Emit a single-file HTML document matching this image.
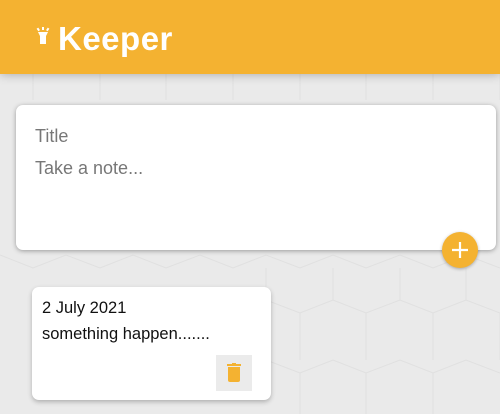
<!DOCTYPE html>
<html><head><style>
body{margin:0;width:500px;height:414px;background:#eaeaea;font-family:"Liberation Sans",sans-serif;position:relative;overflow:hidden}
.hd{position:absolute;left:0;top:0;width:500px;height:74px;background:#f4b231;box-shadow:0 0 10px rgba(0,0,0,.3)}
.logo{position:absolute;left:58px;top:20px;color:#fff;font-size:33px;font-weight:bold;letter-spacing:0.5px}
.form{position:absolute;left:16px;top:105px;width:480px;height:145px;background:#fff;border-radius:7px;box-shadow:0 1px 5px rgba(0,0,0,.35)}
.ph{position:absolute;left:19px;color:#777;font-size:18px}
.add{position:absolute;left:442px;top:232px;width:36px;height:36px;border-radius:50%;background:#f4b231;box-shadow:0 1px 3px rgba(0,0,0,.3)}
.note{position:absolute;left:32px;top:287px;width:239px;height:113px;background:#fff;border-radius:7px;box-shadow:0 2px 5px rgba(0,0,0,.25)}
.note div{position:absolute;left:10px;font-size:16.5px;color:#111}
.del{position:absolute;left:216px;top:355px;width:36px;height:36px;background:#ebebeb}
</style></head><body>
<svg width="500" height="414" style="position:absolute;left:0;top:0" stroke="#e0e0e0" fill="none" stroke-width="1">
<path d="M33 74V100M100 74V100M166 74V100M233 74V100M300 74V100M366 74V100M433 74V100M500 74V100"/>
<path d="M0 255L33 268L66 255L100 268L133 255L166 268L200 255L233 268L266 255L300 268L333 255L366 268L400 255L433 268L466 255L500 268M266 268V300M333 268V300M400 268V300M466 268V300M266 300L300 313L333 300L366 313L400 300L433 313L466 300L500 313M300 313V360M366 313V360M433 313V360M500 313V360M266 360L300 373L333 360L366 373L400 360L433 373L466 360L500 373M300 373V414M366 373V414M433 373V414"/>
</svg>
<div class="hd">
<svg style="position:absolute;left:36px;top:27px" width="14" height="18" viewBox="0 0 14 18" fill="#fff"><rect x="6" y="0" width="2" height="3"/><rect x="1" y="1" width="2" height="3" transform="rotate(-35 2 2)"/><rect x="11" y="1" width="2" height="3" transform="rotate(35 12 2)"/><path d="M2 5H12L10 9V17H4V9Z"/></svg>
<div class="logo">Keeper</div>
</div>
<div class="form"><div class="ph" style="top:21px">Title</div><div class="ph" style="top:53px">Take a note...</div></div>
<div class="add"><svg width="36" height="36"><path d="M18 10V26M10 18H26" stroke="#fff" stroke-width="2.2"/></svg></div>
<div class="note"><div style="top:12px">2 July 2021</div><div style="top:38px">something happen.......</div></div>
<div class="del"><svg width="36" height="36" fill="#f4b231"><rect x="11" y="9" width="14" height="2"/><rect x="16" y="8" width="4" height="2"/><path d="M12 12H24V25Q24 27 22 27H14Q12 27 12 25Z"/></svg></div>
</body></html>
